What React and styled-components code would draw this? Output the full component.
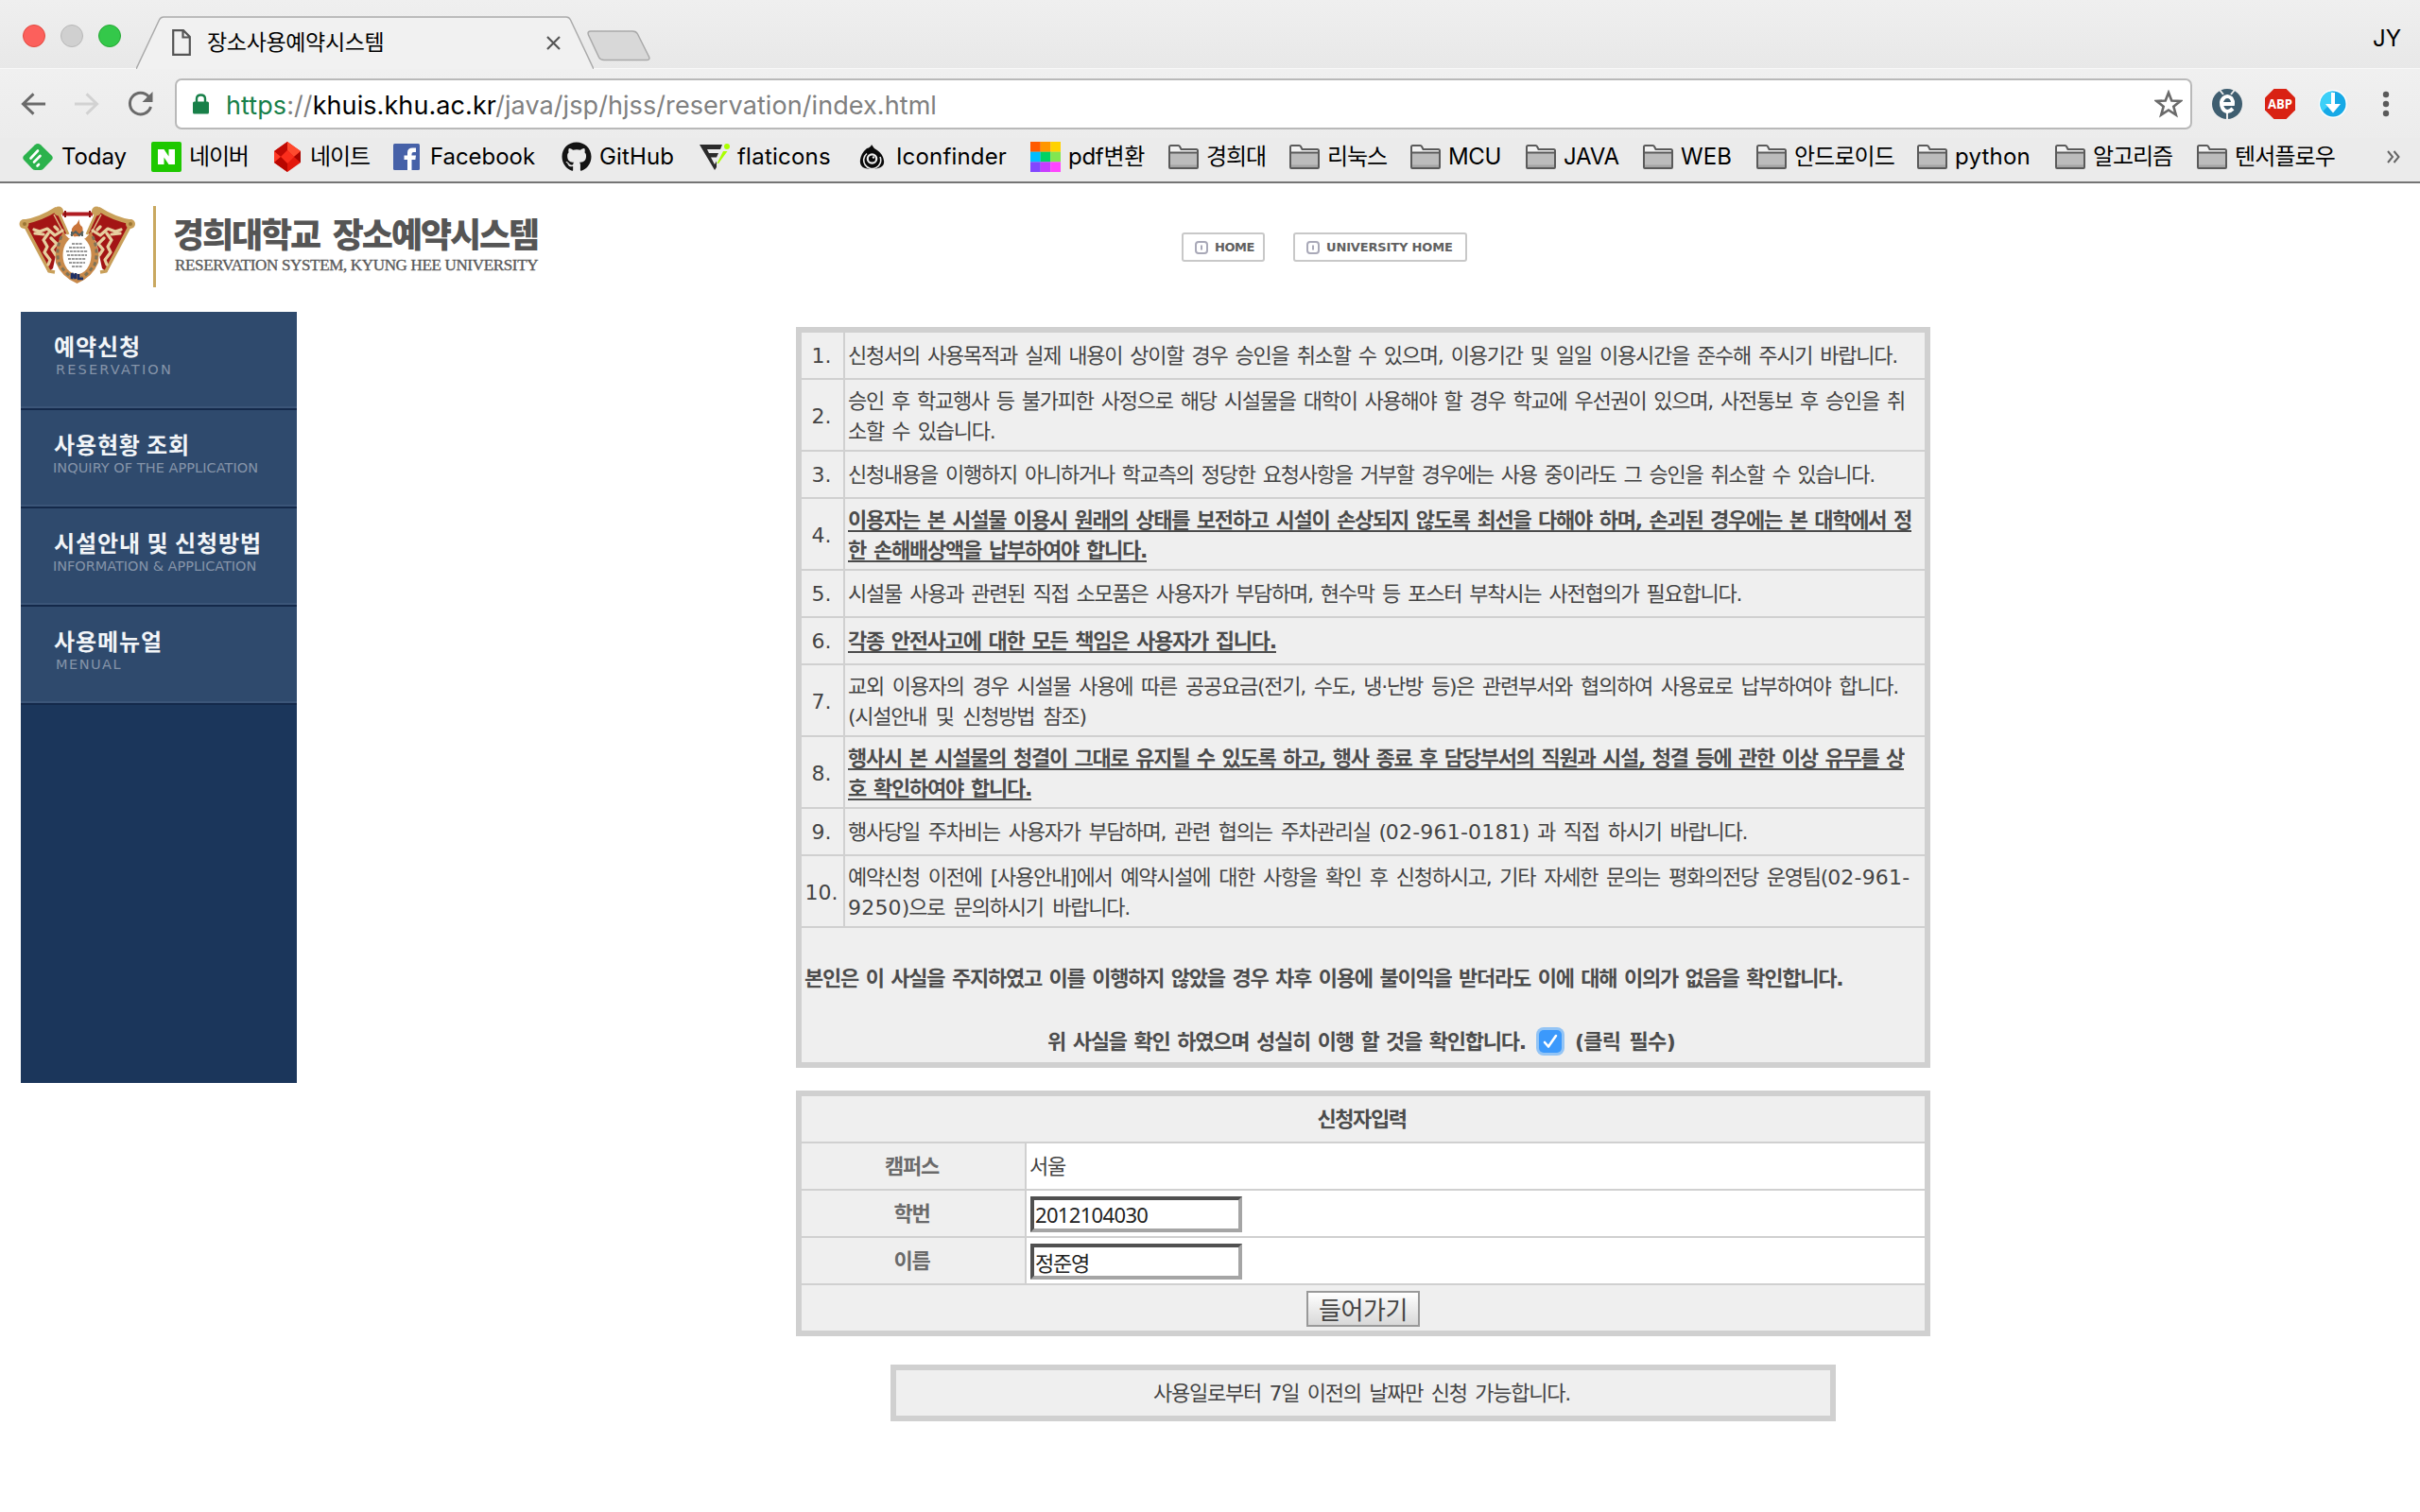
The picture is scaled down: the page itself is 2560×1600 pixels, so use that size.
import React from "react";
import styled, { createGlobalStyle, css } from "styled-components";
import { FaGithub } from "react-icons/fa";

const ui = `Inter, "Noto Sans CJK KR", sans-serif`;
const web = `"DejaVu Sans", "Noto Sans CJK KR", sans-serif`;

const Global = createGlobalStyle`
  * { box-sizing: border-box; }
  body { margin: 0; background: #fff; }
`;

const T = styled.span`
  white-space: pre;
  ${(p) => p.$ls !== undefined && css`letter-spacing: ${p.$ls}px;`}
  ${(p) => p.$ws !== undefined && css`word-spacing: ${p.$ws}px;`}
`;

const Page = styled.div`width: 2560px; height: 1600px; overflow: hidden; background: #fff; font-family: ${ui};`;
const Chrome = styled.header`height: 194px; border-bottom: 2px solid #757575; background: #ebebeb;`;
const TabStrip = styled.div`
  height: 73px; display: flex; align-items: flex-end; padding-left: 24px;
  background: linear-gradient(#efefef, #e8e8e8); border-bottom: 1px solid #f8f8f8;
`;
const Lights = styled.div`display: flex; gap: 16px; width: 120px; height: 72px; padding-top: 26px;`;
const Light = styled.i`
  width: 24px; height: 24px; border-radius: 50%;
  background: ${(p) => p.$fill}; border: 1px solid ${(p) => p.$edge};
`;
const Tab = styled.div`width: 484px; height: 56px; margin-bottom: -1px; position: relative; display: flex; align-items: center; padding: 0 0 0 38px;`;
const TabShape = styled.svg`position: absolute; left: 0; top: 0;`;
const TabBody = styled.div`position: relative; display: flex; align-items: center; width: 411px; height: 56px;`;
const TabTitle = styled.span`margin-left: 17px; flex: 1; font-size: 23px; color: #000; line-height: 30px; margin-top: -1px;`;
const NewTab = styled.svg`margin: 0 0 7px -7px;`;
const Profile = styled.span`margin: 0 20px 15px auto; font-size: 24px; line-height: 32px; color: #000;`;

const Toolbar = styled.div`
  height: 73px; display: flex; align-items: center; padding: 0 0 0 22px;
  background: linear-gradient(#f0f0f0, #ececec);
`;
const NavIcons = styled.div`width: 163px; display: flex; gap: 29px; align-items: center;`;
const Omnibox = styled.div`
  width: 2134px; height: 54px; border: 2px solid #b9b9b9; border-radius: 7px; background: #fff;
  display: flex; align-items: center; padding: 0 8px 0 17px; margin-top: 1px;
`;
const Url = styled.div`margin: 3px 0 0 18px; flex: 1; font-size: 27px; color: #000; white-space: pre; line-height: 36px;`;
const Scheme = styled.span`color: #188049;`;
const Dim = styled.span`color: #808080;`;
const Exts = styled.div`display: flex; align-items: center; margin-left: 21px; gap: 24px;`;
const Dots = styled.svg`margin-left: 12px;`;

const Bookmarks = styled.nav`height: 38px; display: flex; padding: 1px 0 0 24px; align-items: center;`;
const Bookmark = styled.a`width: ${(p) => p.$w}px; display: flex; align-items: center; color: #000; font-size: 24px; line-height: 32px; white-space: pre;`;
const IconSlot = styled.span`width: ${(p) => p.$w || 32}px; height: 36px; margin-right: 8px; display: flex; align-items: center; flex: none;`;
const More = styled.span`width: 14px; display: flex; align-items: center;`;

const Top = styled.div`height: 136px; display: flex; padding: 24px 0 0 20px;`;
const Brand = styled.div`display: flex; width: 1230px;`;
const Rule = styled.div`width: 3px; height: 86px; background: #c9a860; margin: 0 19px 0 18px;`;
const BrandText = styled.div`padding-top: 4px; white-space: pre;`;
const BrandName = styled.div`font: 900 36px/48px "Noto Sans CJK KR", sans-serif; color: #555; height: 48px; margin-left: -1px;`;
const BrandSub = styled.div`font: 17px/22px "Liberation Serif", serif; color: #555; -webkit-text-stroke: 0.4px #666; margin-left: 1px;`;
const TopLink = styled.a`
  height: 31px; margin: 28px 30px 0 0; border: 2px solid #c8c8c8; border-radius: 3px; width: ${(p) => p.$w}px;
  display: flex; align-items: center; padding-left: 12px; gap: 7px; font: bold 13px/20px "DejaVu Sans", sans-serif; color: #606060; white-space: pre;
`;

const Body = styled.div`display: flex; padding-left: 22px;`;
const Side = styled.aside`width: 292px; height: 816px; background: #1b365b;`;
const SideItem = styled.a`
  display: block; height: 104px; padding: 20px 0 0 35px; background: #2f4a6d;
  border-bottom: 2px solid #14294a; box-shadow: inset 0 -2px 0 #3b5578; white-space: pre;
`;
const SideName = styled.div`font: 700 24px/32px "Noto Sans CJK KR", sans-serif; color: #f2f5f8;`;
const SideSub = styled.div`font: 14.5px/18px "DejaVu Sans", sans-serif; color: #8594a9; margin-left: ${(p) => p.$dx || 0}px;`;

const Main = styled.main`flex: 1; margin-left: 10px; padding-top: 16px; display: flex; flex-direction: column; align-items: center; font: 22px/32px ${web}; color: #444;`;
const Panel = styled.section`
  width: ${(p) => p.$w || 1200}px; border: 6px solid #d0d0d0; background: #d0d0d0; margin-bottom: ${(p) => p.$mb || 0}px;
  display: grid; gap: 2px; grid-template-columns: ${(p) => p.$cols || "1fr"};
`;
const Cell = styled.div`
  background: ${(p) => (p.$white ? "#fff" : "#efefef")}; height: ${(p) => p.$h || 48}px; display: flex; align-items: center;
  padding: ${(p) => (p.$h > 48 ? 3 : 1)}px 0 0 ${(p) => p.$pl || 0}px; white-space: pre;
  ${(p) => p.$center && css`justify-content: center; padding-right: ${p.$pr ?? 3}px;`}
  ${(p) => p.$span && css`grid-column: 1 / -1;`}
  ${(p) => p.$bold && css`font-weight: 700; color: ${p.$color || "#4c4c4c"};`}
`;
const Lines = styled.div`
  letter-spacing: -1.24px; white-space: pre;
  ${(p) => p.$strong && css`font-weight: 700; color: #4c4c4c; text-decoration: underline; text-decoration-thickness: 2px; text-underline-offset: 3px; text-decoration-skip-ink: none;`}
`;
const Line = styled.div`height: 32px;`;
const Num = styled.span`letter-spacing: 0.2px;`;
const Agree = styled.div`
  grid-column: 1 / -1; height: 142px; background: #efefef; padding: 38px 0 0 3px; font-weight: 700; color: #4c4c4c;
  letter-spacing: -1.24px; white-space: pre;
`;
const Confirm = styled.div`display: flex; align-items: center; padding-left: 257px; margin-top: 35px; height: 32px;`;
const Check = styled.span`
  width: 24px; height: 24px; margin: -2px 14px 0 14px; border-radius: 5px; background: #3b99fc; box-shadow: 0 0 0 3px #93c4f5;
  display: flex; align-items: center; justify-content: center;
`;
const Field = styled.input`
  width: 224px; height: 38px; border: 4px solid; border-color: #505050 #a5a5a5 #a5a5a5 #505050; padding: 0 0 0 1px; margin: 0;
  font: 22px/28px "Noto Sans", "Noto Sans CJK KR", sans-serif; letter-spacing: ${(p) => p.$ls}px; color: #222; background: #fff; outline: none; border-radius: 0;
`;
const Enter = styled.button`
  width: 120px; height: 38px; border: 2px solid #999; padding: 0; background: linear-gradient(#fff, #d8d8d8);
  font: 26px/30px "Noto Sans CJK KR", sans-serif; color: #444; white-space: pre;
`;

const Folder = () => (
  <svg width="32" height="26" viewBox="0 0 32 26">
    <path d="M1 24V2.5Q1 1 2.500 1H10.500Q11.500 1 12 2L13.500 5H29.500Q31 5 31 6.500V24Q31 25 30 25H2Q1 25 1 24Z" fill="#f2f2f2" stroke="#5a5a5a" strokeWidth="2" />
    <path d="M2 9H30V24H2Z" fill="#bcbcbc" /><path d="M2 21.500H30V24H2Z" fill="#a5a5a5" />
    <path d="M1 8.500H31" stroke="#5a5a5a" strokeWidth="2" />
  </svg>
);
const Feedly = () => (
  <svg width="32" height="28" viewBox="0 0 32 28">
    <path d="M13 1.200Q16 -1 19 1.200L31 13Q32.500 15 31 17L22 26.500Q20.500 28 18.500 28H13.500Q11.500 28 10 26.500L1 17Q-.5 15 1 13Z" fill="#2bb24c" />
    <g stroke="#fff" strokeWidth="2.600" strokeLinecap="round"><path d="M8.500 15.500L16 7.500M12 19.500L18.500 13M15.500 23.500L17 22" /></g>
  </svg>
);
const Naver = () => (
  <svg width="32" height="32"><rect width="32" height="32" rx="2" fill="#1ec800" /><path d="M7 8h6.500l5 7.500V8H25v16h-6.500l-5-7.500V24H7z" fill="#fff" /></svg>
);
const Nate = () => (
  <svg width="30" height="32" viewBox="0 0 30 32">
    <path d="M16 0L30 10V22L16 32L2 22V10Z" fill="#e3180c" /><path d="M16 0L30 10L23 16L16 9Z" fill="#ff4a2e" />
    <path d="M16 0L2 10L9 16L16 9Z" fill="#c00a04" /><path d="M9 16L16 9L23 16L16 23Z" fill="#fb2e1c" />
    <path d="M2 10L9 16L2 22Z" fill="#ff3c28" /><path d="M30 10L23 16L30 22Z" fill="#a80500" /><path d="M9 16L16 23V32L2 22Z" fill="#b80600" />
  </svg>
);
const Facebook = () => (
  <svg width="28" height="28"><rect width="28" height="28" rx="1.500" fill="#4661a8" /><path d="M15 28V17H11.500V12.500H15V9.500Q15 4.500 20.500 4.500H24V9H21.500Q19.500 9 19.500 11V12.500H24L23.400 17H19.500V28Z" fill="#fff" /></svg>
);
const Flat = () => (
  <svg width="32" height="28" viewBox="0 0 32 28">
    <path d="M0 1H24L22 6H8L10 10H20L18 14.500H12L16 22L18 18.500V25L16 28Z" fill="#2b2b2b" />
    <path d="M25 8H29.500L20 21H18.500Z" fill="#aaff00" /><circle cx="29" cy="3" r="3" fill="#aaff00" />
  </svg>
);
const IconFinder = () => (
  <svg width="27" height="26" viewBox="0 0 27 26">
    <path d="M13 0Q15 4 19 6Q25 10 26 17Q27 23 20 25Q13 27 6 25Q0 23 1 16Q2 9 8 4Q12 3 13 0Z" fill="#0a0a0a" />
    <path d="M22 13A9 9 0 1 1 8 9.500" fill="none" stroke="#eee" strokeWidth="1.600" />
    <circle cx="13.500" cy="15" r="5.800" fill="#eee" /><circle cx="13.500" cy="15" r="3.600" fill="#0a0a0a" /><circle cx="15" cy="13.500" r="1.200" fill="#eee" />
  </svg>
);
const Pdf = () => {
  const c = ["#ff5a00", "#ff9600", "#ffd200", "#00beff", "#00d264", "#82e650", "#8246ff", "#c83cff", "#ff46ff"];
  return <svg width="32" height="32">{c.map((f, i) => <rect key={f} x={(i % 3) * 10.67} y={Math.floor(i / 3) * 10.67} width="10.800" height="10.800" fill={f} />)}</svg>;
};
const GitHub = () => <FaGithub size={32} color="#141414" />;

// width of the slot, icon, label, letter spacing, icon width
const marks = [
  [136, Feedly, "Today", -0.07, 33], [128, Naver, "네이버", -1.2], [128, Nate, "네이트", -1.08], [178, Facebook, "Facebook", -0.05, 31],
  [146, GitHub, "GitHub", 0.12], [169, Flat, "flaticons", 0.24], [181, IconFinder, "Iconfinder", 0.17, 31],
  [146, Pdf, "pdf변환", -0.29], [128, Folder, "경희대", -1.08], [128, Folder, "리눅스", -1.08], [122, Folder, "MCU", -0.36], [124, Folder, "JAVA", -0.16],
  [120, Folder, "WEB", 0.07], [170, Folder, "안드로이드", -0.88], [146, Folder, "python", 0.22], [150, Folder, "알고리즘", -1.08], [201, Folder, "텐서플로우", -0.88],
];

const Arrow = ({ color, flip }) => (
  <svg width="27" height="26" viewBox="0 0 28 26" fill="none" stroke={color} strokeWidth="3">
    <path d={flip ? "M1 13H25M14 2L25.500 13L14 24" : "M27 13H3M14 2L2.500 13L14 24"} />
  </svg>
);

const Emblem = () => (
  <svg width="124" height="86" viewBox="0 0 124 86">
    <path d="M6 20L36 6L43 8L51 28L42 38L36 66L31 70Z" fill="#a31515" />
    <path d="M118 20L88 6L81 8L73 28L82 38L88 66L93 70Z" fill="#a31515" />
    <path d="M6 20L32 69L38 70M118 20L92 69L86 70" stroke="#c9a05a" strokeWidth="3.500" fill="none" />
    <path d="M41 5L52 30M83 5L72 30" stroke="#c9a05a" strokeWidth="3" fill="none" />
    <path d="M37 9L48 30M87 9L76 30" stroke="#dcbb86" strokeWidth="1.500" fill="none" />
    <rect x="46" y="6.500" width="32" height="4" fill="#b01c22" /><path d="M49 5V12M75 5V12" stroke="#8b1010" strokeWidth="2" />
    <circle cx="5.500" cy="19" r="5" fill="#c9a05a" /><circle cx="118" cy="19" r="5" fill="#c9a05a" />
    <circle cx="42" cy="5.500" r="5" fill="#c9a05a" /><circle cx="82" cy="5.500" r="5" fill="#c9a05a" />
    <path d="M5 17Q23 14 40 3M119 17Q101 14 84 3" stroke="#c9a05a" strokeWidth="5" fill="none" />
    <circle cx="6" cy="19" r="2" fill="#9a7434" /><circle cx="118" cy="19" r="2" fill="#9a7434" />
    <g stroke="#e6cf9f" strokeWidth="3.200" fill="none" strokeLinecap="round" strokeLinejoin="round">
      <path d="M16 25L22 27L30 24L38 31L46 26M17 29L26 30M31 29L26 36L30 43L27 49L33 57L31 62M34 34L40 40L35 46L39 52M38 22L41 25" />
      <path d="M108 25L102 27L94 24L86 31L78 26M107 29L98 30M93 29L98 36L94 43L97 49L91 57L93 62M90 34L84 40L89 46L85 52M86 22L83 25" />
    </g>
    <path d="M47 27Q37 44 39 60Q45 75 61.500 82Q78 75 84 60Q86 44 76 27Q70 38 61.500 36Q53 38 47 27Z" fill="#c98a4b" />
    <g stroke="#7f7256" strokeWidth="3" strokeDasharray="4 3" fill="none"><path d="M45 32Q38 48 43 62Q49 71 58 77M78 32Q85 48 80 62Q74 71 65 77" /></g>
    <path d="M57 31Q53 23 61 19L64 14Q63 19 67 22Q69 27 65 31L61 35Z" fill="#c9743a" />
    <path d="M55 31L60 27L64 31L68 27M56 27V32M67 27V32" stroke="#56615f" strokeWidth="2" fill="none" />
    <ellipse cx="61.500" cy="52" rx="15" ry="20" fill="#fff" />
    <path d="M56 40H67M53 44H70M50 48H73M51 52H72M52 56H71M53 60H70M56 64H67" stroke="#999" strokeWidth="1.800" strokeDasharray="3 0.8" />
    <path d="M56 71V77M56 71L60 77M60 77V71M63 72V77H68" stroke="#1d2f66" strokeWidth="2.600" fill="none" />
  </svg>
);

const Info = () => (
  <svg width="14" height="14" viewBox="0 0 14 14" fill="none" stroke="#a9a9b8" strokeWidth="2"><rect x="1" y="1" width="12" height="12" rx="3" /><path d="M7 4.500V9.500" /></svg>
);

// each line of a rule with its word spacing
const rules = [
  [["신청서의 사용목적과 실제 내용이 상이할 경우 승인을 취소할 수 있으며, 이용기간 및 일일 이용시간을 준수해 주시기 바랍니다.", 2.34]],
  [["승인 후 학교행사 등 불가피한 사정으로 해당 시설물을 대학이 사용해야 할 경우 학교에 우선권이 있으며, 사전통보 후 승인을 취", 2.2], ["소할 수 있습니다.", 2.6]],
  [["신청내용을 이행하지 아니하거나 학교측의 정당한 요청사항을 거부할 경우에는 사용 중이라도 그 승인을 취소할 수 있습니다.", 2.2]],
  [["이용자는 본 시설물 이용시 원래의 상태를 보전하고 시설이 손상되지 않도록 최선을 다해야 하며, 손괴된 경우에는 본 대학에서 정", 1.22], ["한 손해배상액을 납부하여야 합니다.", 1.54]],
  [["시설물 사용과 관련된 직접 소모품은 사용자가 부담하며, 현수막 등 포스터 부착시는 사전협의가 필요합니다.", 2.4]],
  [["각종 안전사고에 대한 모든 책임은 사용자가 집니다.", 1.39]],
  [["교외 이용자의 경우 시설물 사용에 따른 공공요금(전기, 수도, 냉·난방 등)은 관련부서와 협의하여 사용료로 납부하여야 합니다.", 3.06], ["(시설안내 및 신청방법 참조)", 3.65]],
  [["행사시 본 시설물의 청결이 그대로 유지될 수 있도록 하고, 행사 종료 후 담당부서의 직원과 시설, 청결 등에 관한 이상 유무를 상", 1.22], ["호 확인하여야 합니다.", 1.52]],
  [["행사당일 주차비는 사용자가 부담하며, 관련 협의는 주차관리실 (02-961-0181) 과 직접 하시기 바랍니다.", 3.06]],
  [["예약신청 이전에 [사용안내]에서 예약시설에 대한 사항을 확인 후 신청하시고, 기타 자세한 문의는 평화의전당 운영팀(02-961-", 3.12], ["9250)으로 문의하시기 바랍니다.", 3.8]],
];
const strongRows = [3, 5, 7];
const withNums = (t) => t.split(/([\d-]{3,})/).map((s, i) => (i % 2 ? <Num key={i}>{s}</Num> : s));

// name, spacing, caption, spacing, caption offset
const side = [
  ["예약신청", 0.92, "RESERVATION", 2.17, 2],
  ["사용현황 조회", 0.87, "INQUIRY OF THE APPLICATION", 0.04, -1],
  ["시설안내 및 신청방법", 0.94, "INFORMATION & APPLICATION", -0.04, -1],
  ["사용메뉴얼", 0.92, "MENUAL", 1.48, 2],
];

export default function App() {
  return (
    <Page>
      <Global />
      <Chrome>
        <TabStrip>
          <Lights>
            <Light $fill="#fc605c" $edge="#e2493f" /><Light $fill="#d0d0d0" $edge="#b8b8b8" /><Light $fill="#34c84a" $edge="#27a835" />
          </Lights>
          <Tab>
            <TabShape width="484" height="56"><path d="M0 56L24.500 4Q26 1 29 1H455Q458 1 459.500 4L484 56" fill="#f1f1f1" stroke="#aaa" strokeWidth="1.500" /></TabShape>
            <TabBody>
              <svg width="20" height="28" viewBox="0 0 20 28" fill="none" stroke="#555" strokeWidth="2.200"><path d="M1.200 1.200H12L18.800 8V26.800H1.200ZM11.500 1.500V8.500H18.500" /></svg>
              <TabTitle><T $ls={-0.34}>장소사용예약시스템</T></TabTitle>
              <svg width="15" height="15" viewBox="0 0 15 15" stroke="#555" strokeWidth="2.200"><path d="M1 1L14 14M14 1L1 14" /></svg>
            </TabBody>
          </Tab>
          <NewTab width="68" height="33" viewBox="0 0 68 33"><path d="M4 1H48Q52 1 53.500 4L65.500 28Q67 31.500 63 31.500H18Q14 31.500 12.500 28.500L1.500 5Q0 1 4 1Z" fill="#d8d8d8" stroke="#a9a9a9" strokeWidth="1.500" /></NewTab>
          <Profile>JY</Profile>
        </TabStrip>
        <Toolbar>
          <NavIcons>
            <Arrow color="#6a6a6a" /><Arrow color="#d2d2d2" flip />
            <svg width="30" height="28" viewBox="0 0 30 28" fill="none"><path d="M23.500 6.500A11.300 11.300 0 1 0 25.500 17" stroke="#6a6a6a" strokeWidth="3" /><path d="M27.500 1V12H16.500Z" fill="#6a6a6a" /></svg>
          </NavIcons>
          <Omnibox>
            <svg width="17" height="22" viewBox="0 0 17 22"><rect y="8.500" width="17" height="13" rx="1.500" fill="#188049" /><path d="M4 9V5.500Q4 1.500 8.500 1.500T13 5.500V9" fill="none" stroke="#188049" strokeWidth="2.400" /></svg>
            <Url><T $ls={0.08}><Scheme>https</Scheme><Dim>://</Dim>khuis.khu.ac.kr<Dim>/java/jsp/hjss/reservation/index.html</Dim></T></Url>
            <svg width="30" height="30" viewBox="0 0 30 30"><path d="M15 3L18.300 11.500L27.500 12L20.300 17.700L22.800 26.500L15 21.500L7.200 26.500L9.700 17.700L2.500 12L11.700 11.500Z" fill="none" stroke="#6a6a6a" strokeWidth="2.600" /></svg>
          </Omnibox>
          <Exts>
            <svg width="32" height="32" viewBox="0 0 32 32"><circle cx="16" cy="16" r="16" fill="#3f5e70" /><path d="M8 1L12 6M24 1L20 6M16 25V32" stroke="#ebebeb" strokeWidth="2" /><path d="M22 21Q16 27 11.500 21Q8 14 12 10Q16 6 20.500 10Q22.500 13 22 16H12" fill="none" stroke="#fff" strokeWidth="4" /></svg>
            <svg width="32" height="32" viewBox="0 0 32 32" overflow="visible"><path d="M9.500 0H22.500L32 9.500V22.500L22.500 32H9.500L0 22.500V9.500Z" fill="#d92213" /><text x="16" y="21" textAnchor="middle" textLength="26" lengthAdjust="spacingAndGlyphs" fontFamily="Open Sans, sans-serif" fontWeight="700" fontSize="15" fill="#fff">ABP</text></svg>
            <svg width="32" height="32" viewBox="0 0 32 32"><circle cx="16" cy="16" r="15" fill="#fff" /><circle cx="16" cy="16" r="13.500" fill="#16a9e6" /><path d="M16 2.500A13.500 13.500 0 0 0 5 24L16 13Z" fill="#3cd0f8" /><path d="M14 4H18V16H24L16 25.500L8 16H14Z" fill="#fff" /></svg>
            <Dots width="8" height="28" viewBox="0 0 8 28" fill="#5a5a5a"><circle cx="4" cy="4" r="3.200" /><circle cx="4" cy="14" r="3.200" /><circle cx="4" cy="24" r="3.200" /></Dots>
          </Exts>
        </Toolbar>
        <Bookmarks>
          {marks.map(([w, Icon, label, ls, slot]) => (
            <Bookmark key={label} $w={w}><IconSlot $w={slot}><Icon /></IconSlot><T $ls={ls}>{label}</T></Bookmark>
          ))}
          <More><svg width="14" height="14" viewBox="0 0 14 14" fill="none" stroke="#666" strokeWidth="2"><path d="M1 1L6 7L1 13M7.500 1L12.500 7L7.500 13" /></svg></More>
        </Bookmarks>
      </Chrome>
      <Top>
        <Brand>
          <Emblem />
          <Rule />
          <BrandText>
            <BrandName><T $ls={-2.1} $ws={7.6}>경희대학교 장소예약시스템</T></BrandName>
            <BrandSub><T $ls={-0.33}>RESERVATION SYSTEM, KYUNG HEE UNIVERSITY</T></BrandSub>
          </BrandText>
        </Brand>
        <TopLink $w={88}><Info /><T $ls={-0.44}>HOME</T></TopLink>
        <TopLink $w={184}><Info /><T $ls={-0.15}>UNIVERSITY HOME</T></TopLink>
      </Top>
      <Body>
        <Side>
          {side.map(([name, nls, sub, sls, dx]) => (
            <SideItem key={name}><SideName><T $ls={nls}>{name}</T></SideName><SideSub $dx={dx}><T $ls={sls}>{sub}</T></SideSub></SideItem>
          ))}
        </Side>
        <Main>
          <Panel $cols="44px 1fr" $mb={24}>
            {rules.map((lines, i) => (
              <React.Fragment key={i}>
                <Cell $center $pr={2} $h={lines.length > 1 ? 74 : 48}>{i + 1}.</Cell>
                <Cell $h={lines.length > 1 ? 74 : 48} $pl={3}>
                  <Lines $strong={strongRows.includes(i)}>{lines.map(([t, ws]) => <Line key={t}><T $ws={ws}>{withNums(t)}</T></Line>)}</Lines>
                </Cell>
              </React.Fragment>
            ))}
            <Agree>
              <T $ws={1.22}>본인은 이 사실을 주지하였고 이를 이행하지 않았을 경우 차후 이용에 불이익을 받더라도 이에 대해 이의가 없음을 확인합니다.</T>
              <Confirm>
                <T $ws={1.31}>위 사실을 확인 하였으며 성실히 이행 할 것을 확인합니다.</T>
                <Check><svg width="16" height="16" viewBox="0 0 16 16" fill="none" stroke="#fff" strokeWidth="2.600" strokeLinecap="round" strokeLinejoin="round"><path d="M2 9L6 13.500L14 2" /></svg></Check>
                <T $ls={-0.7} $ws={2.2}>(클릭 필수)</T>
              </Confirm>
            </Agree>
          </Panel>
          <Panel $cols="236px 1fr" $mb={30}>
            <Cell $span $center $bold><T $ls={-1.44}>신청자입력</T></Cell>
            <Cell $center $bold $color="#6a6a6a"><T $ls={-1.24}>캠퍼스</T></Cell><Cell $white $pl={3}><T $ls={-1.24}>서울</T></Cell>
            <Cell $center $bold $color="#6a6a6a"><T $ls={-1.24}>학번</T></Cell><Cell $white $pl={4}><Field $ls={-0.66} defaultValue="2012104030" /></Cell>
            <Cell $center $bold $color="#6a6a6a"><T $ls={-1.24}>이름</T></Cell><Cell $white $pl={4}><Field $ls={-1.3} defaultValue="정준영" /></Cell>
            <Cell $span $center $pr={0}><Enter><T $ls={-0.42}>들어가기</T></Enter></Cell>
          </Panel>
          <Panel $w={1000}><Cell $center><Lines><T $ws={2.7}>사용일로부터 7일 이전의 날짜만 신청 가능합니다.</T></Lines></Cell></Panel>
        </Main>
      </Body>
    </Page>
  );
}
